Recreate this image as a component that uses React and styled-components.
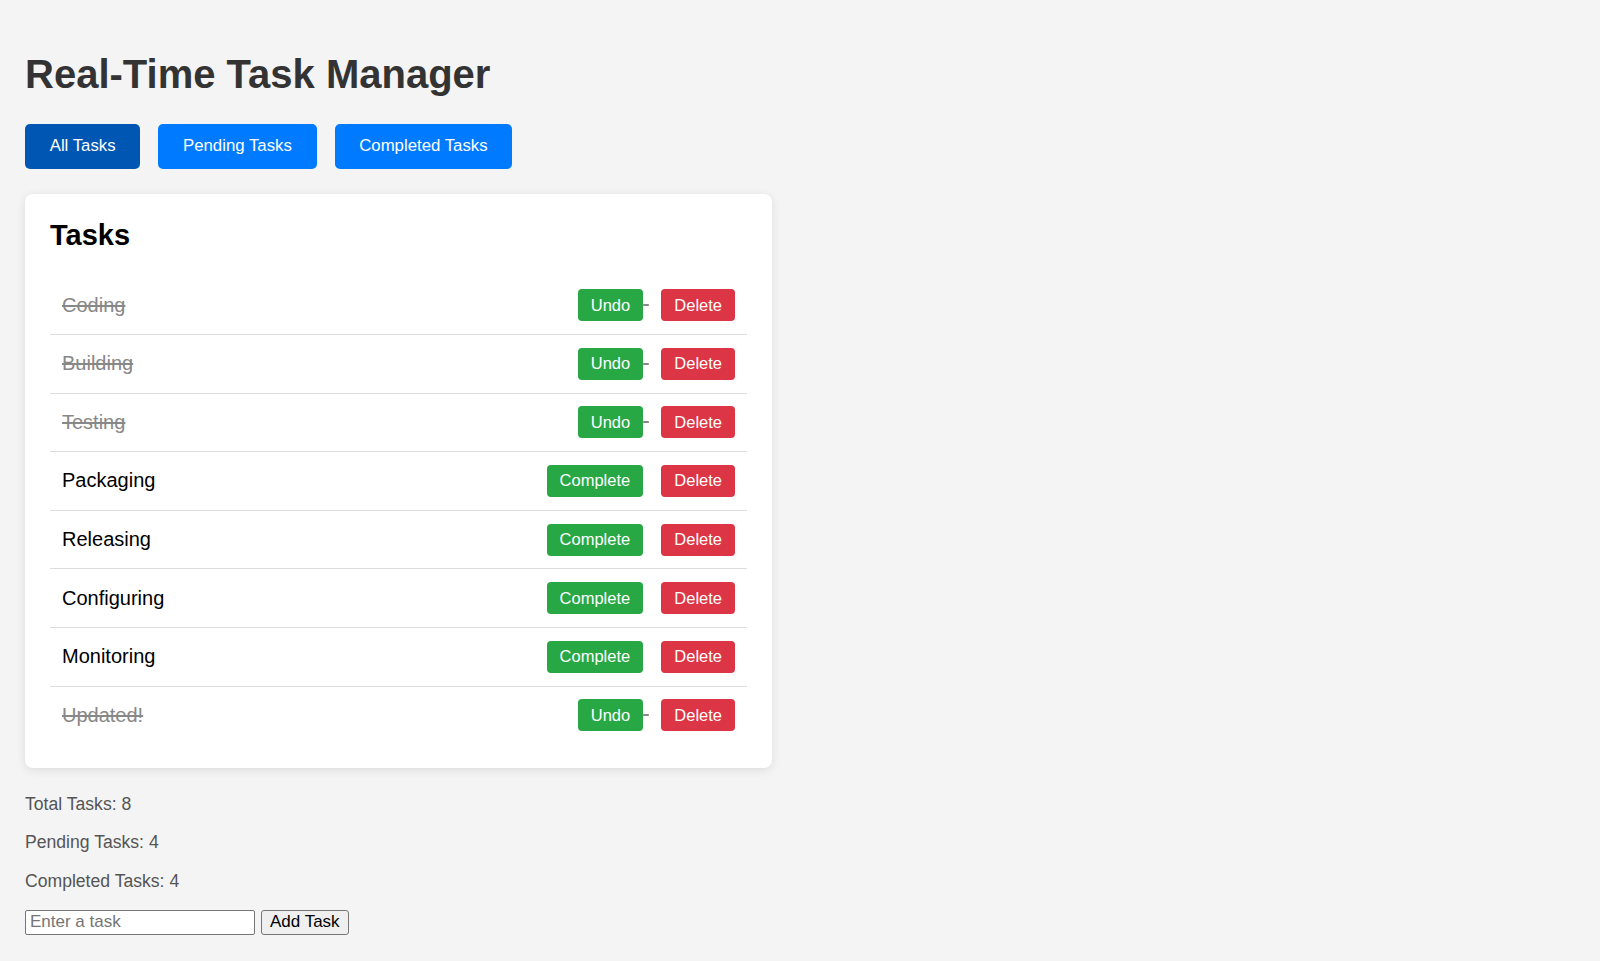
import React, { useState } from "react";
import styled, { createGlobalStyle } from "styled-components";

const GlobalStyle = createGlobalStyle`
  body {
    margin: 0;
    padding: 25px;
    background-color: #f4f4f4;
    font-family: "Liberation Sans", Arial, sans-serif;
  }
`;

const Title = styled.h1`
  font-size: 40px;
  color: #333;
  margin: 27px 0 26.5px;
`;

const Filters = styled.div`
  display: flex;
  gap: 18px;
  margin-bottom: 25.5px;
`;

const FilterButton = styled.button`
  font-family: inherit;
  font-size: 16.8px;
  padding: 12.7px 24.7px;
  border: none;
  border-radius: 5px;
  color: #fff;
  cursor: pointer;
  background-color: ${(props) => (props.active ? "#0056b3" : "#007bff")};
`;

const Card = styled.div`
  box-sizing: border-box;
  width: 747px;
  padding: 25px 25px 24px;
  background: #fff;
  border-radius: 8px;
  box-shadow: 0 2px 10px rgba(0, 0, 0, 0.1);
`;

const CardTitle = styled.h2`
  font-size: 29px;
  color: #000;
  margin: 0 0 24px;
`;

const List = styled.ul`
  list-style: none;
  margin: 0;
  padding: 0;
`;

const Row = styled.li`
  display: flex;
  align-items: center;
  justify-content: space-between;
  padding: 12.8px 12px;
  font-size: 20px;
  border-bottom: 1px solid #ddd;
  color: ${(props) => (props.done ? "#888" : "#000")};
  text-decoration: ${(props) => (props.done ? "line-through" : "none")};

  &:last-child {
    border-bottom: none;
  }
`;

const Actions = styled.div`
  white-space: nowrap;
`;

const ActionButton = styled.button`
  font-family: inherit;
  font-size: 16.5px;
  padding: 6.5px 13px;
  border: none;
  border-radius: 4px;
  color: #fff;
  cursor: pointer;
  background-color: ${(props) => (props.danger ? "#dc3545" : "#28a745")};
  & + & {
    margin-left: 12.5px;
  }
`;

const Stats = styled.div`
  display: flex;
  flex-direction: column;
  gap: 17.2px;
  margin-top: 26px;
`;

const Stat = styled.p`
  margin: 0;
  font-size: 17.6px;
  color: #555;
`;

const AddForm = styled.div`
  display: flex;
  gap: 6.5px;
  margin-top: 18px;
`;

const TaskInput = styled.input`
  box-sizing: border-box;
  width: 229.5px;
  height: 25px;
  font-family: inherit;
  font-size: 17px;
  padding: 1px 4px;
  border: 1px solid #767676;
  border-radius: 2px;
  background: #fff;

  &::placeholder {
    color: #757575;
  }
`;

const AddButton = styled.button`
  box-sizing: border-box;
  height: 25px;
  font-family: inherit;
  font-size: 17px;
  padding: 0 8px;
  color: #000;
  background: #efefef;
  border: 1px solid #767676;
  border-radius: 3px;
`;

const initialTasks = [
  { id: 1, text: "Coding", done: true },
  { id: 2, text: "Building", done: true },
  { id: 3, text: "Testing", done: true },
  { id: 4, text: "Packaging", done: false },
  { id: 5, text: "Releasing", done: false },
  { id: 6, text: "Configuring", done: false },
  { id: 7, text: "Monitoring", done: false },
  { id: 8, text: "Updated!", done: true },
];

const App = () => {
  const [tasks, setTasks] = useState(initialTasks);
  const [filter, setFilter] = useState("all");
  const [draft, setDraft] = useState("");

  const pending = tasks.filter((t) => !t.done).length;
  const completed = tasks.length - pending;

  const visible = tasks.filter((t) =>
    filter === "all" ? true : filter === "pending" ? !t.done : t.done
  );

  const toggle = (id) =>
    setTasks(tasks.map((t) => (t.id === id ? { ...t, done: !t.done } : t)));
  const remove = (id) => setTasks(tasks.filter((t) => t.id !== id));
  const add = () => {
    if (!draft.trim()) return;
    setTasks([...tasks, { id: Date.now(), text: draft.trim(), done: false }]);
    setDraft("");
  };

  return (
    <>
      <GlobalStyle />
      <Title>Real-Time Task Manager</Title>
      <Filters>
        <FilterButton active={filter === "all"} onClick={() => setFilter("all")}>
          All Tasks
        </FilterButton>
        <FilterButton active={filter === "pending"} onClick={() => setFilter("pending")}>
          Pending Tasks
        </FilterButton>
        <FilterButton active={filter === "completed"} onClick={() => setFilter("completed")}>
          Completed Tasks
        </FilterButton>
      </Filters>
      <Card>
        <CardTitle>Tasks</CardTitle>
        <List>
          {visible.map((task) => (
            <Row key={task.id} done={task.done}>
              <span>{task.text}</span>
              <Actions>
                <ActionButton onClick={() => toggle(task.id)}>
                  {task.done ? "Undo" : "Complete"}
                </ActionButton>{" "}
                <ActionButton danger onClick={() => remove(task.id)}>
                  Delete
                </ActionButton>
              </Actions>
            </Row>
          ))}
        </List>
      </Card>
      <Stats>
        <Stat>Total Tasks: {tasks.length}</Stat>
        <Stat>Pending Tasks: {pending}</Stat>
        <Stat>Completed Tasks: {completed}</Stat>
      </Stats>
      <AddForm>
        <TaskInput
          placeholder="Enter a task"
          value={draft}
          onChange={(e) => setDraft(e.target.value)}
        />
        <AddButton onClick={add}>Add Task</AddButton>
      </AddForm>
    </>
  );
};

export default App;
